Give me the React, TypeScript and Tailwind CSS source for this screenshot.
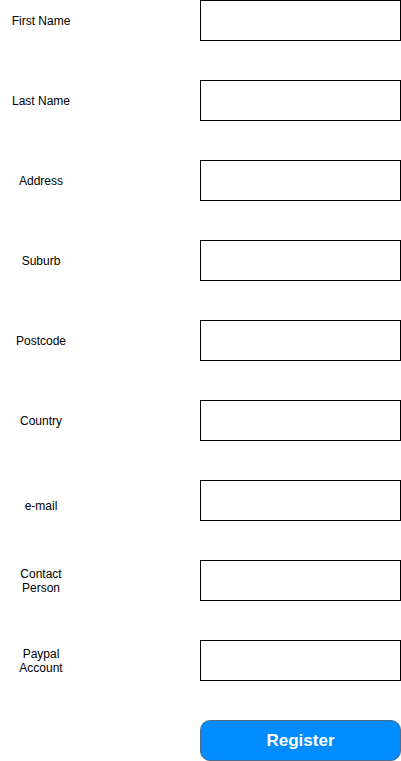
const fields = [
  { id: 'firstName', label: 'First Name', type: 'text' },
  { id: 'lastName', label: 'Last Name', type: 'text' },
  { id: 'address', label: 'Address', type: 'text' },
  { id: 'suburb', label: 'Suburb', type: 'text' },
  { id: 'postcode', label: 'Postcode', type: 'text' },
  { id: 'country', label: 'Country', type: 'text' },
  { id: 'email', label: 'e-mail', type: 'email', low: true },
  { id: 'contact', label: 'Contact Person', type: 'text' },
  { id: 'paypal', label: 'Paypal Account', type: 'text' },
];

export default function App() {
  return (
    <form
      className="flex flex-col gap-[39px] bg-white font-['Liberation_Sans',Arial,sans-serif] text-black"
      onSubmit={(e) => e.preventDefault()}
    >
      {fields.map((f) => (
        <div key={f.id} className="grid grid-cols-[82px_1fr] items-center gap-x-[118px]">
          <label
            htmlFor={f.id}
            className={`px-2 text-center text-xs leading-[14px] ${f.low ? 'pt-[10px]' : ''}`}
          >
            {f.label}
          </label>
          <input
            id={f.id}
            name={f.id}
            type={f.type}
            className="h-[41px] w-full min-w-0 border border-black bg-white px-2 text-xs"
          />
        </div>
      ))}
      <div className="grid grid-cols-[82px_1fr] gap-x-[118px]">
        <button
          type="submit"
          className="col-start-2 h-[41px] rounded-[10px] border border-[#4d6f8f] bg-[#008cff] text-[17px] font-bold text-white"
        >
          Register
        </button>
      </div>
    </form>
  );
}
